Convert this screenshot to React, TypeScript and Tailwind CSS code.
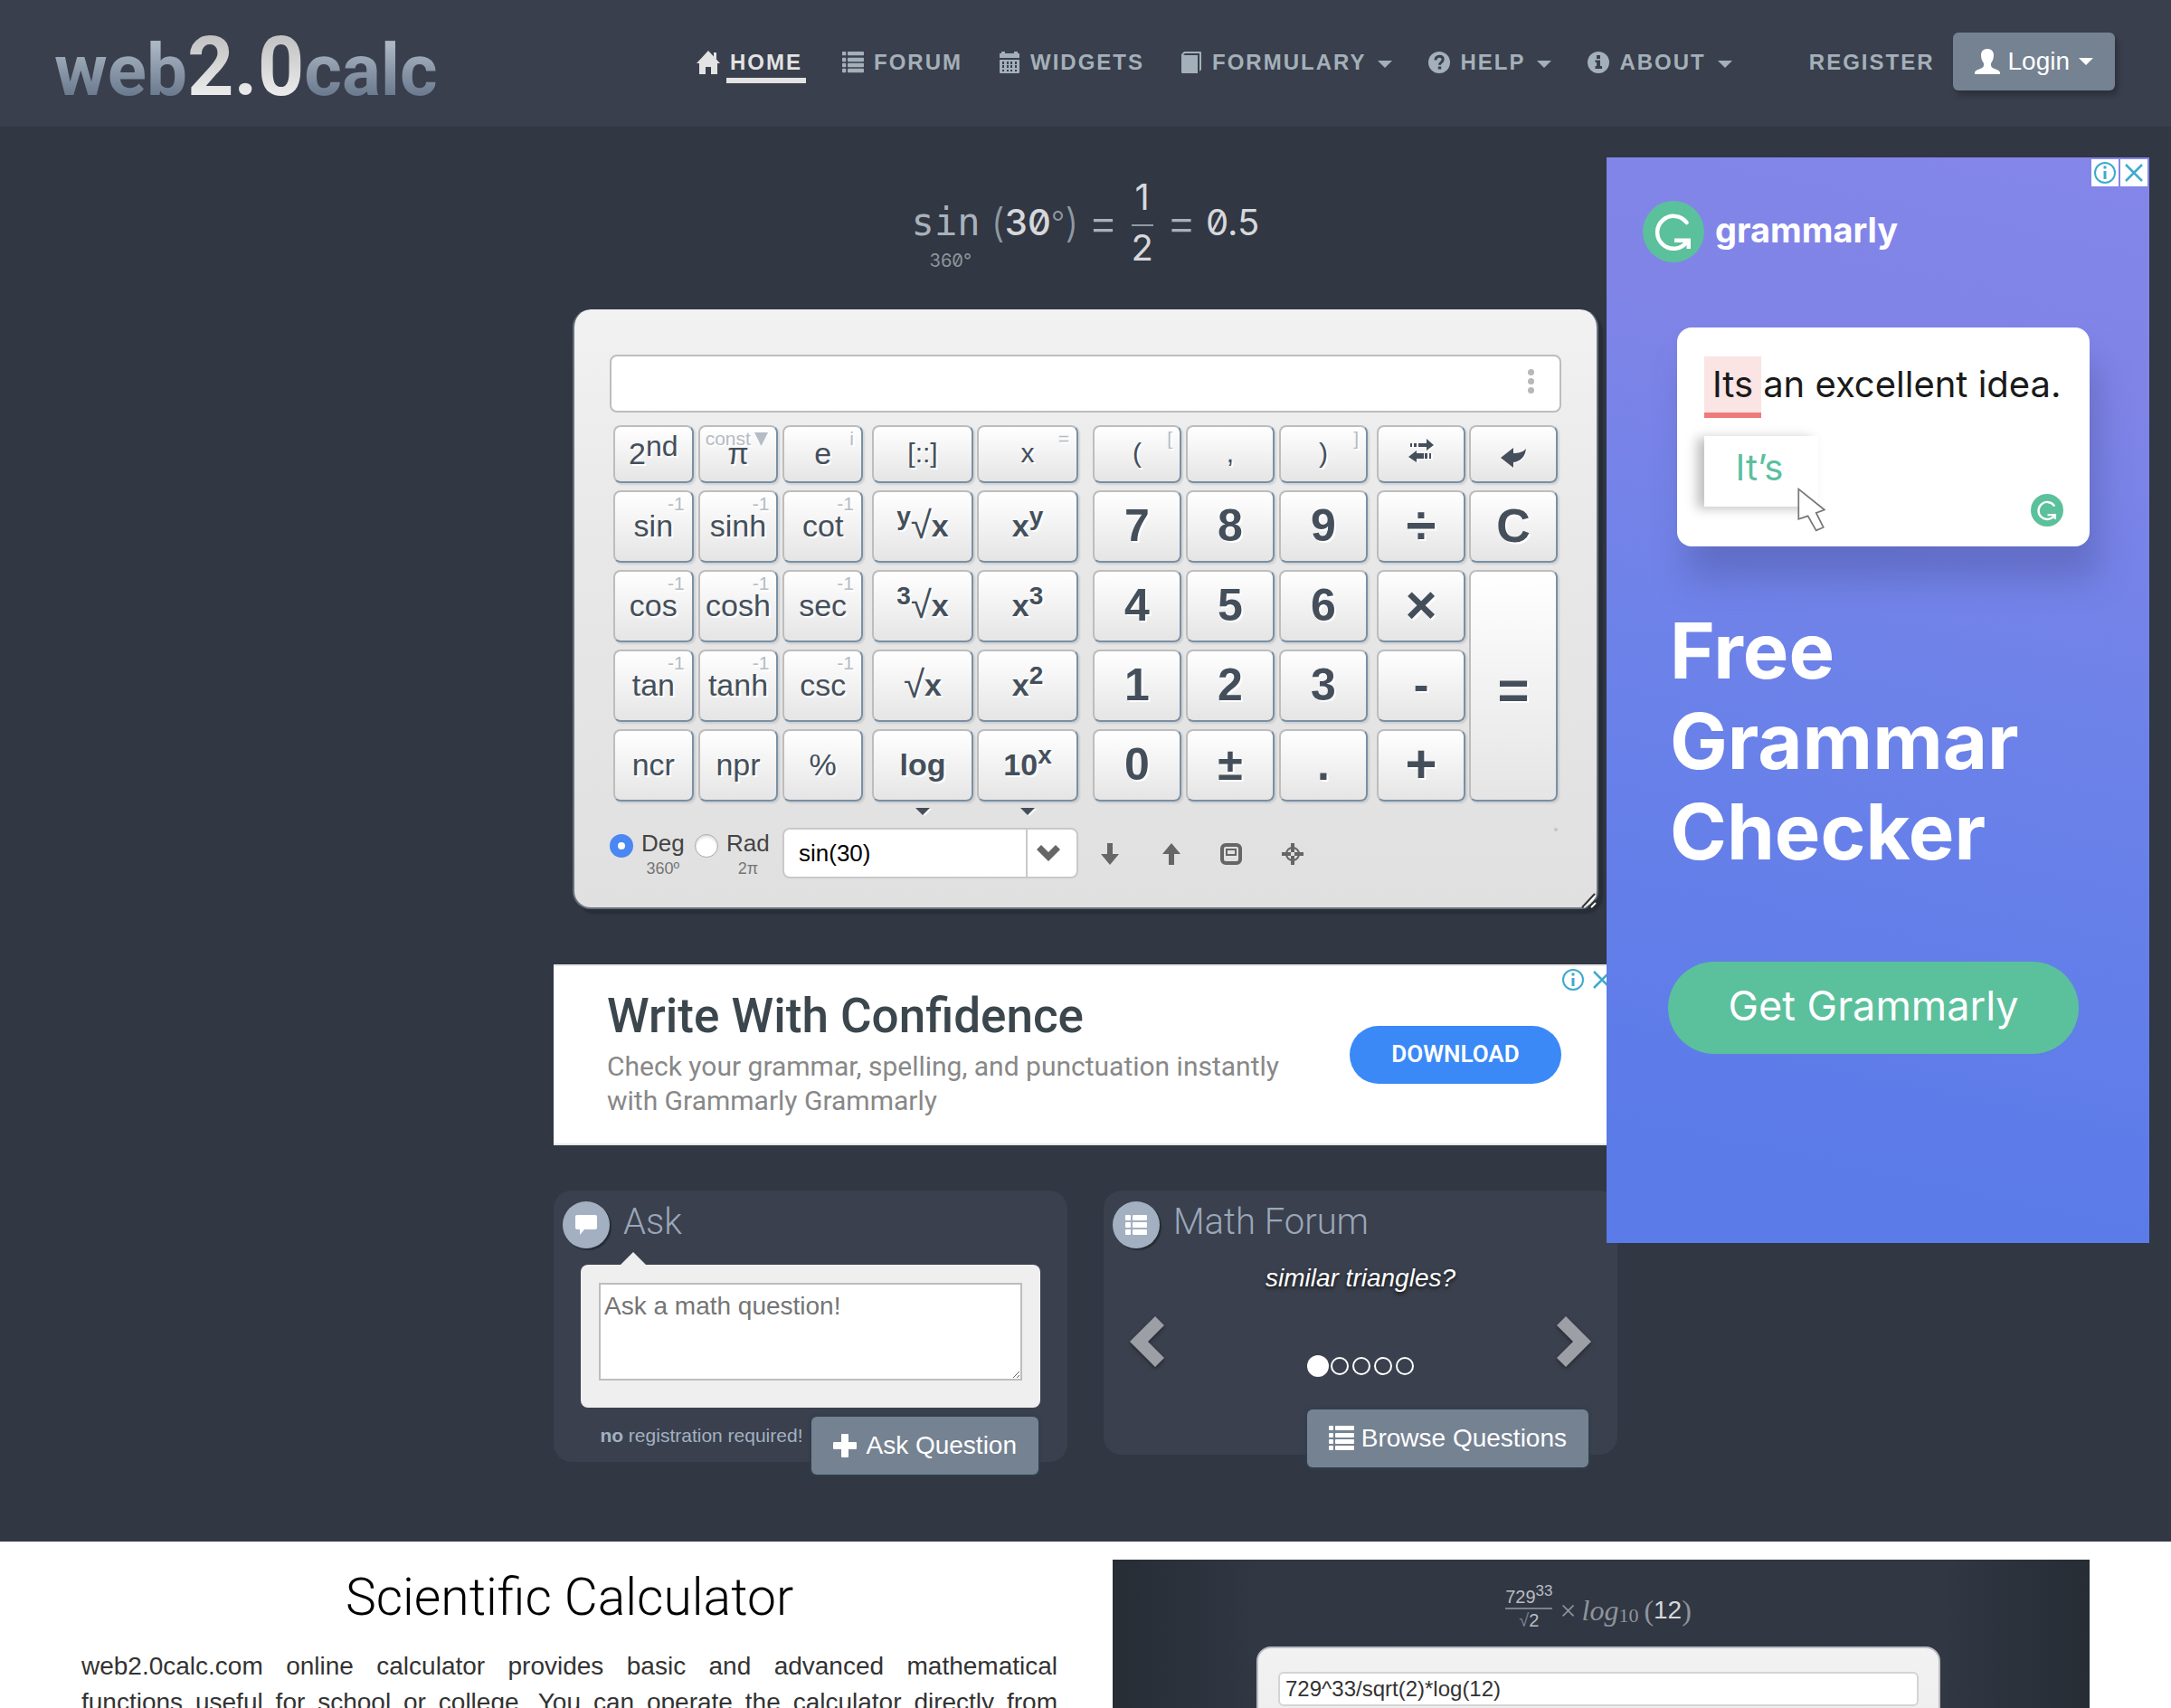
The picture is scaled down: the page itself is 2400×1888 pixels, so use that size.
import type { ReactNode } from "react";

type IconProps = { className?: string };

function HomeIcon({ className = "" }: IconProps) {
  return (
    <svg viewBox="0 0 26 26" className={className} fill="currentColor" aria-hidden="true">
      <path d="M13 0 26 14h-3v12h-7v-8h-6v8H3V14H0z" />
      <path d="M19 2h3v8l-3-3z" />
    </svg>
  );
}

function ListIcon({ className = "" }: IconProps) {
  return (
    <svg viewBox="0 0 28 28" className={className} fill="currentColor" aria-hidden="true">
      {[0, 8, 15, 22].map((y) => (
        <g key={y}>
          <rect x="0" y={y} width="5" height="5" rx="1" />
          <rect x="7" y={y} width="21" height="5" rx="1" />
        </g>
      ))}
    </svg>
  );
}

function ThListIcon({ className = "" }: IconProps) {
  return (
    <svg viewBox="0 0 24 24" className={className} fill="currentColor" aria-hidden="true">
      {[1, 9, 17].map((y) => (
        <g key={y}>
          <rect x="0" y={y} width="6" height="6" rx="1" />
          <rect x="8" y={y} width="16" height="6" rx="1" />
        </g>
      ))}
    </svg>
  );
}

function CalendarIcon({ className = "" }: IconProps) {
  return (
    <svg viewBox="0 0 24 24" className={className} fill="currentColor" fillRule="evenodd" aria-hidden="true">
      <path d="M3 0h4v2h10V0h4v2h2v5H1V2h2z" />
      <path d="M1 9h22v14a1 1 0 0 1-1 1H2a1 1 0 0 1-1-1zM4 11v3h2v-3zm5 0v3h2v-3zm4 0v3h2v-3zm5 0v3h2v-3zM4 15v3h2v-3zm5 0v3h2v-3zm4 0v3h2v-3zm5 0v3h2v-3zM4 20v2h2v-2zm5 0v2h2v-2zm4 0v2h2v-2zm5 0v2h2v-2z" />
    </svg>
  );
}

function BookIcon({ className = "" }: IconProps) {
  return (
    <svg viewBox="0 0 24 24" className={className} fill="currentColor" aria-hidden="true">
      <path d="M4 0h18a1 1 0 0 1 1 1v19l-2 2V2H5L3 4h16v20H2a1 1 0 0 1-1-1V3z" />
    </svg>
  );
}

function HelpIcon({ className = "" }: IconProps) {
  return (
    <svg viewBox="0 0 24 24" className={className} aria-hidden="true">
      <circle cx="12" cy="12" r="12" fill="currentColor" />
      <path d="M8 9.500c0-2.600 1.600-4.200 4.200-4.200 2.500 0 4 1.500 4 3.500 0 3-3.700 3-3.700 6" fill="none" stroke="#393f4c" strokeWidth="3" />
      <rect x="10.800" y="16.500" width="3.400" height="3" fill="#393f4c" />
    </svg>
  );
}

function InfoIcon({ className = "" }: IconProps) {
  return (
    <svg viewBox="0 0 24 24" className={className} aria-hidden="true">
      <circle cx="12" cy="12" r="12" fill="currentColor" />
      <path d="M10 4h4v4h-4zM8.500 9.500H14V16h2v3H8.500v-3H10v-4H8.500z" fill="#393f4c" />
    </svg>
  );
}

function UserIcon({ className = "" }: IconProps) {
  return (
    <svg viewBox="0 0 28 28" className={className} fill="currentColor" aria-hidden="true">
      <path d="M14 0c4 0 7 2.500 7 7 0 4-1.500 7-3 9v2c0 2 1.500 3 4 4s6 2 6 4.500V28H0v-1.500C0 24 3.500 23 6 22s4-2 4-4v-2c-1.500-2-3-5-3-9 0-4.500 3-7 7-7z" />
    </svg>
  );
}

function Caret({ className = "" }: IconProps) {
  return (
    <svg viewBox="0 0 16 8" className={className} fill="currentColor" aria-hidden="true">
      <path d="M0 0h16L8 8z" />
    </svg>
  );
}

function GrammarlyMark({ className = "" }: IconProps) {
  return (
    <svg viewBox="0 0 68 68" className={className} aria-hidden="true">
      <circle cx="34" cy="34" r="34" fill="#5bc09c" />
      <path d="M48.500 24A18 18 0 1 0 49 45" fill="none" stroke="#fff" strokeWidth="4.500" strokeLinecap="round" />
      <path d="M35 41.500h18V53h-4.500v-7H35z" fill="#fff" />
    </svg>
  );
}

function AdChoices({ className = "" }: IconProps) {
  return (
    <svg viewBox="0 0 24 24" className={className} fill="none" stroke="#3fa9cf" aria-hidden="true">
      <circle cx="12" cy="12" r="11" strokeWidth="2" />
      <path d="M12 4.500v3M12 10v9" strokeWidth="3" />
    </svg>
  );
}

function AdClose({ className = "" }: IconProps) {
  return (
    <svg viewBox="0 0 24 24" className={className} fill="none" stroke="#3fa9cf" strokeWidth="2.500" aria-hidden="true">
      <path d="m3 3 18 18M21 3 3 21" />
    </svg>
  );
}

const navItems: { label: string; icon: ReactNode; caret?: boolean; active?: boolean }[] = [
  { label: "Home", icon: <HomeIcon className="h-[26px] w-[26px]" />, active: true },
  { label: "Forum", icon: <ListIcon className="h-6 w-6" /> },
  { label: "Widgets", icon: <CalendarIcon className="h-6 w-6" /> },
  { label: "Formulary", icon: <BookIcon className="h-6 w-6" />, caret: true },
  { label: "Help", icon: <HelpIcon className="h-6 w-6" />, caret: true },
  { label: "About", icon: <InfoIcon className="h-6 w-6" />, caret: true },
];

function Header() {
  return (
    <header className="flex h-[140px] items-center bg-[#393f4c] pr-[62px] pb-1 pl-[60px]">
      <a href="#home" className="w-[424px] pt-4 font-['Roboto',sans-serif] text-[80px] leading-[100px] font-bold whitespace-nowrap">
        <span className="bg-linear-to-b from-[#aab6c2] from-20% to-[#66748a] to-85% bg-clip-text text-transparent">web</span>
        <span className="bg-linear-to-b from-[#c4c4c4] from-20% to-[#ececec] to-80% bg-clip-text text-[90px] text-transparent">2.0</span>
        <span className="bg-linear-to-b from-[#aab6c2] from-20% to-[#66748a] to-85% bg-clip-text text-transparent">calc</span>
      </a>
      <nav className="ml-[286px] flex gap-10 pt-0.5 text-2xl leading-9 font-bold tracking-[2px] text-[#a4b0b9] uppercase">
        {navItems.map((item) => (
          <a
            key={item.label}
            href={"#" + item.label.toLowerCase()}
            className={item.active ? "flex items-center gap-[7px] text-[#e3e3e3]" : "flex items-center gap-[11px]"}
          >
            {item.icon}
            <span className={item.active ? "relative px-1 after:absolute after:inset-x-0 after:-bottom-[5px] after:h-[6px] after:bg-[#e3e3e3]" : ""}>{item.label}</span>
            {item.caret && <Caret className="mt-1 ml-0.5 h-2 w-4" />}
          </a>
        ))}
      </nav>
      <div className="ml-auto flex items-center gap-[21px]">
        <a href="#register" className="pt-0.5 text-2xl font-bold tracking-[2px] text-[#a4b0b9] uppercase">Register</a>
        <button className="flex h-16 items-center rounded-md bg-[#758292] px-6 text-[28px] text-white shadow-[3px_5px_6px_rgba(0,0,0,0.25)]">
          <UserIcon className="mr-2 h-7 w-7" />
          Login
          <Caret className="ml-2.5 h-2 w-4" />
        </button>
      </div>
    </header>
  );
}

function Formula() {
  return (
    <div className="flex justify-center pt-[54px] pb-[44px] font-['Inter',sans-serif] text-[40px] leading-[48px] text-[#d6d8db] slashed-zero">
      <div className="flex items-center">
        <div className="relative font-['DejaVu_Sans_Mono',monospace] text-[42px] text-[#a9b2bb]">
          sin
          <span className="absolute top-[50px] left-5 font-['Inter',sans-serif] text-[20px] leading-8 text-[#8f949b]">360°</span>
        </div>
        <span className="ml-3 text-[44px] font-light text-[#8f99a3]">(</span>
        <span className="font-medium">30</span>
        <span className="text-[34px] font-light text-[#8f99a3]">°</span>
        <span className="text-[44px] font-light text-[#8f99a3]">)</span>
        <span className="ml-2.5 text-[52px] font-light text-[#a9b0b8]">=</span>
        <div className="mx-3.5 flex flex-col items-center">
          <span>1</span>
          <span className="mt-1.5 h-0.5 w-6 bg-[#8f99a3]" />
          <span>2</span>
        </div>
        <span className="text-[52px] font-light text-[#a9b0b8]">=</span>
        <span className="ml-2.5">0.5</span>
      </div>
    </div>
  );
}

function Key({ children, corner, className = "text-[34px]", label }: { children: ReactNode; corner?: string; className?: string; label?: string }) {
  return (
    <button
      aria-label={label}
      className={
        "relative flex items-center justify-center rounded-lg border-2 border-t-[#bdbdbd] border-r-[#7890a5] border-b-[#7890a5] border-l-[#bdbdbd] bg-linear-to-b from-white to-[#e5e5e5] pb-0.5 leading-none whitespace-nowrap text-[#444f5b] shadow-[2px_2px_2px_rgba(0,0,0,0.1)] [text-shadow:2px_2px_0_#fff] " +
        className
      }
    >
      {corner && <span className="absolute top-0.5 right-2 text-[21px] leading-[22px] font-normal text-[#b5bcc5]">{corner}</span>}
      {children}
    </button>
  );
}

function Raised({ children }: { children: ReactNode }) {
  return <sup className="top-0 -translate-y-2.5 self-center text-[28px] leading-none">{children}</sup>;
}

function Root() {
  return <span className="text-[42px] leading-none font-normal">√</span>;
}

const powerKey = "text-[34px] font-bold";
const digitKey = "text-[50px] font-bold";

function Calculator() {
  return (
    <section className="relative mx-[21px] rounded-[20px] border-x-2 border-b-2 border-[#68707c] bg-linear-to-b from-[#f2f2f2] via-[#e8e8e8] via-40% to-[#e0e0e0] px-[39px] pt-[50px] pb-8 shadow-[5px_5px_2px_#282e37]">
      <div className="relative">
        <input aria-label="Expression" className="block h-16 w-full rounded-lg border-2 border-[#bdbdbd] bg-white px-4 text-[28px] text-black" />
        <button aria-label="More" className="absolute top-4 right-[30px] flex flex-col gap-[3px]">
          <span className="h-[7px] w-[7px] rounded-full bg-[#b8b8b8]" />
          <span className="h-[7px] w-[7px] rounded-full bg-[#b8b8b8]" />
          <span className="h-[7px] w-[7px] rounded-full bg-[#b8b8b8]" />
        </button>
      </div>

      <div className="mx-1 mt-3.5 flex">
        <div className="grid flex-[276] grid-cols-3 grid-rows-[64px_repeat(4,80px)] gap-x-[5px] gap-y-2">
          <Key>
            2<sup className="top-0 -translate-y-2 self-center text-[32px] leading-none">nd</sup>
          </Key>
          <Key>
            <span className="absolute top-0.5 left-1.5 flex items-center text-[21px] leading-[22px] text-[#b5bcc5]">
              const
              <svg viewBox="0 0 15 15" className="ml-1 h-[15px] w-[15px]" fill="currentColor" aria-hidden="true">
                <path d="M0 0h15L7.500 15z" />
              </svg>
            </span>
            π
          </Key>
          <Key corner="i">e</Key>
          <Key corner="-1">sin</Key>
          <Key corner="-1">sinh</Key>
          <Key corner="-1">cot</Key>
          <Key corner="-1">cos</Key>
          <Key corner="-1">cosh</Key>
          <Key corner="-1">sec</Key>
          <Key corner="-1">tan</Key>
          <Key corner="-1">tanh</Key>
          <Key corner="-1">csc</Key>
          <Key>ncr</Key>
          <Key>npr</Key>
          <Key>%</Key>
        </div>
        <div className="ml-2.5 grid flex-[228] grid-cols-2 grid-rows-[64px_repeat(4,80px)] gap-x-1 gap-y-2">
          <Key className="text-[30px]">[::]</Key>
          <Key className="text-[30px]" corner="=">x</Key>
          <Key className={powerKey}>
            <Raised>y</Raised>
            <Root />x
          </Key>
          <Key className={powerKey}>
            x<Raised>y</Raised>
          </Key>
          <Key className={powerKey}>
            <Raised>3</Raised>
            <Root />x
          </Key>
          <Key className={powerKey}>
            x<Raised>3</Raised>
          </Key>
          <Key className={powerKey}>
            <Root />x
          </Key>
          <Key className={powerKey}>
            x<Raised>2</Raised>
          </Key>
          <Key className={powerKey}>
            log
            <Caret className="absolute top-[85px] h-2 w-4 drop-shadow-[2px_1px_0_#fff]" />
          </Key>
          <Key className={powerKey}>
            10<Raised>x</Raised>
            <Caret className="absolute top-[85px] h-2 w-4 drop-shadow-[2px_1px_0_#fff]" />
          </Key>
        </div>
        <div className="ml-4 grid flex-[304] grid-cols-3 grid-rows-[64px_repeat(4,80px)] gap-x-[5px] gap-y-2">
          <Key className="text-[30px]" corner="[">(</Key>
          <Key className="text-[30px]">,</Key>
          <Key className="text-[30px]" corner="]">)</Key>
          {["7", "8", "9", "4", "5", "6", "1", "2", "3", "0", "±", "."].map((d) => (
            <Key key={d} className={digitKey}>{d}</Key>
          ))}
        </div>
        <div className="ml-2.5 grid flex-[200] grid-cols-2 grid-rows-[64px_repeat(4,80px)] gap-x-1 gap-y-2">
          <Key label="Convert">
            <svg viewBox="0 0 28 26" className="mb-1.5 h-[26px] w-7 drop-shadow-[2px_1px_0_#fff]" fill="currentColor" aria-hidden="true">
              <path d="M11 5h9V0l8 7-8 6V9h-9zM2 5h2v4H2zM6 5h3v4H6zM17 16H9v-3L0 20l9 6v-4h8zM18 16h3v6h-3zM23 16h2v6h-2z" />
            </svg>
          </Key>
          <Key label="Backspace">
            <svg viewBox="0 0 28 22" className="mt-2.5 h-[22px] w-7 drop-shadow-[1px_1px_0_#fff]" fill="currentColor" aria-hidden="true">
              <path d="M0 11 14 0v6c5 0 11-1 14-5-1 9-6 14-14 15v6z" />
            </svg>
          </Key>
          <Key className="text-[60px] font-bold">÷</Key>
          <Key className="text-[52px] font-bold">C</Key>
          <Key className="text-[60px] font-bold">×</Key>
          <Key className="row-span-3 pt-3 text-[60px] font-bold">=</Key>
          <Key className="text-[50px] font-bold">-</Key>
          <Key className="text-[60px] font-bold">+</Key>
        </div>
      </div>

      <div className="mt-[29px] grid h-14 grid-cols-[191fr_327fr_534fr] text-[26px] leading-[30px] text-[#444]">
        <div className="flex pt-0.5">
          <label className="flex w-[94px] gap-[9px]">
            <input type="radio" name="angle" defaultChecked className="mt-[5px] h-[26px] w-[26px] shrink-0 appearance-none rounded-full border border-[#9a9a9a] bg-white checked:border-[9px] checked:border-[#4a87f2]" />
            <span className="flex flex-col items-center">
              Deg
              <span className="text-[18px] leading-[26px] text-[#757575]">360º</span>
            </span>
          </label>
          <label className="flex gap-[9px]">
            <input type="radio" name="angle" className="mt-[5px] h-[26px] w-[26px] shrink-0 appearance-none rounded-full border border-[#aaa] bg-white shadow-[inset_0_2px_3px_rgba(0,0,0,0.15)] checked:border-[9px] checked:border-[#4a87f2]" />
            <span className="flex flex-col items-center">
              Rad
              <span className="text-[18px] leading-[26px] text-[#757575]">2π</span>
            </span>
          </label>
        </div>
        <div className="relative">
          <select aria-label="History" className="block h-14 w-full appearance-none rounded-lg border-2 border-[#c9c9c9] bg-white pl-4 text-[26px] text-black">
            <option>sin(30)</option>
          </select>
          <span className="pointer-events-none absolute top-0.5 right-0.5 flex h-[52px] w-[56px] items-center justify-center border-l-2 border-[#c9c9c9]">
            <svg viewBox="0 0 26 18" className="mr-2 h-[18px] w-[26px]" fill="#666" aria-hidden="true">
              <path d="M0 5 5 0l8 8 8-8 5 5-13 13z" />
            </svg>
          </span>
        </div>
        <div className="flex items-center pl-[25px] text-[#666]">
          <button aria-label="Down" className="mr-12">
            <svg viewBox="0 0 20 24" className="h-6 w-5" fill="currentColor" aria-hidden="true"><path d="M7 0h6v12h7L10 24 0 12h7z" /></svg>
          </button>
          <button aria-label="Up" className="mr-11">
            <svg viewBox="0 0 20 24" className="h-6 w-5" fill="currentColor" aria-hidden="true"><path d="M7 24h6V12h7L10 0 0 12h7z" /></svg>
          </button>
          <button aria-label="Window" className="mr-11">
            <svg viewBox="0 0 24 24" className="h-6 w-6" fill="none" stroke="currentColor" aria-hidden="true">
              <rect x="2" y="2" width="20" height="20" rx="4" strokeWidth="4" />
              <rect x="7" y="7" width="10" height="6" strokeWidth="2" />
            </svg>
          </button>
          <button aria-label="Center">
            <svg viewBox="0 0 24 24" className="h-6 w-6" fill="none" stroke="currentColor" aria-hidden="true">
              <circle cx="12" cy="12" r="7" strokeWidth="2" />
              <path d="M12 0v10M12 14v10M0 12h10M14 12h10" strokeWidth="4" />
            </svg>
          </button>
          <span className="mr-1 ml-auto h-1 w-1 self-start rounded-full bg-[#c4c4c4]" />
        </div>
      </div>
      <svg viewBox="0 0 18 18" className="absolute right-0 -bottom-px h-[18px] w-[18px]" fill="none" aria-hidden="true">
        <path d="M4 17 17 4M12 17l5-5" stroke="#fff" strokeWidth="2" />
        <path d="M2 17 16 2M9 17l8-8" stroke="#333" strokeWidth="2" />
      </svg>
    </section>
  );
}

function BannerAd() {
  return (
    <section className="relative mt-[61px] flex h-[200px] items-center border-y-2 border-[#e6e8e8] bg-white pr-[62px] pl-[59px] font-['Roboto',sans-serif]">
      <div className="pb-0.5">
        <h2 className="text-[53px] leading-[58px] font-medium text-[#3b464d]">Write With Confidence</h2>
        <p className="mt-2 w-[760px] text-[30px] leading-[38px] text-[#888]">Check your grammar, spelling, and punctuation instantly with Grammarly Grammarly</p>
      </div>
      <button className="ml-auto h-16 w-[234px] rounded-full bg-[#3a89f7] pb-0.5 text-[26px] font-semibold text-white">DOWNLOAD</button>
      <div className="absolute top-[3px] right-[5px] flex gap-2">
        <AdChoices className="h-6 w-6" />
        <AdClose className="h-6 w-6" />
      </div>
    </section>
  );
}

const panelTitle = "font-['Roboto',sans-serif] text-[40px] leading-[46px] font-light text-[#9aa7b9]";
const actionButton = "flex h-16 items-center rounded-md bg-[#758292] px-6 text-[28px] text-white shadow-[0_0_3px_2px_#323f4e]";

function AskPanel() {
  return (
    <section className="rounded-[20px] bg-[#3a404d] pt-3">
      <div className="flex items-start gap-[15px] pl-2.5">
        <span className="flex h-[52px] w-[52px] items-center justify-center rounded-full bg-[#a2b0c1] text-white shadow-[2px_2px_1px_#262c36]">
          <svg viewBox="0 0 24 22" className="h-[22px] w-6" fill="currentColor" aria-hidden="true">
            <path d="M2 0h20a2 2 0 0 1 2 2v12a2 2 0 0 1-2 2H10l-5 6v-6H2a2 2 0 0 1-2-2V2a2 2 0 0 1 2-2z" />
          </svg>
        </span>
        <h2 className={panelTitle}>Ask</h2>
      </div>
      <div className="relative mx-[30px] mt-[18px] rounded-lg bg-[#efefef] px-5 pt-5 pb-[30px]">
        <svg viewBox="0 0 28 14" className="absolute -top-3.5 left-11 h-3.5 w-7" fill="#efefef" aria-hidden="true"><path d="M14 0l14 14H0z" /></svg>
        <textarea aria-label="Question" placeholder="Ask a math question!" className="block h-[108px] w-full border-2 border-[#bdbdbd] bg-white px-1 py-1.5 text-[28px] leading-9 placeholder:text-[#757575]" />
      </div>
      <div className="mt-2.5 mr-8 -mb-3.5 flex items-center justify-end gap-2.5">
        <p className="-mt-[22px] text-[21px] text-[#a2b0c1]">
          <b>no</b> registration required!
        </p>
        <button className={actionButton}>
          <svg viewBox="0 0 26 26" className="mr-2.5 h-[26px] w-[26px]" fill="currentColor" aria-hidden="true">
            <path d="M10 0h6a1 1 0 0 1 1 1v8h8a1 1 0 0 1 1 1v6a1 1 0 0 1-1 1h-8v8a1 1 0 0 1-1 1h-6a1 1 0 0 1-1-1v-8H1a1 1 0 0 1-1-1v-6a1 1 0 0 1 1-1h8V1a1 1 0 0 1 1-1z" />
          </svg>
          Ask Question
        </button>
      </div>
    </section>
  );
}

function ForumPanel() {
  return (
    <section className="rounded-[20px] bg-[#3a404d] pt-3">
      <div className="flex items-start gap-[15px] pl-2.5">
        <span className="flex h-[52px] w-[52px] items-center justify-center rounded-full bg-[#a2b0c1] text-white shadow-[2px_2px_1px_#262c36]">
          <ThListIcon className="h-6 w-6" />
        </span>
        <h2 className={panelTitle}>Math Forum</h2>
      </div>
      <div className="flex h-[178px] justify-between px-[29px] pt-4">
        <button aria-label="Previous" className="mb-2 drop-shadow-[0_2px_2px_rgba(0,0,0,0.4)]">
          <svg viewBox="0 0 38 56" className="mt-5 h-14 w-[38px]" fill="#9c9fa6" aria-hidden="true"><path d="M28 0 38 10 20 28 38 46 28 56 0 28z" /></svg>
        </button>
        <div className="flex flex-col items-center">
          <a href="#similar-triangles" className="text-[28px] leading-[34px] text-white italic [text-shadow:0_2px_4px_rgba(0,0,0,0.8)]">similar triangles?</a>
          <div className="mt-[68px] flex items-center gap-1">
            {[0, 1, 2, 3, 4].map((n) => (
              <button
                key={n}
                aria-label={"Question " + (n + 1)}
                className={n === 0 ? "-mr-0.5 h-6 w-6 rounded-full bg-white" : "h-5 w-5 rounded-full border-2 border-white"}
              />
            ))}
          </div>
        </div>
        <button aria-label="Next" className="mb-2 drop-shadow-[0_2px_2px_rgba(0,0,0,0.4)]">
          <svg viewBox="0 0 38 56" className="mt-5 h-14 w-[38px]" fill="#9c9fa6" aria-hidden="true"><path d="M10 0 0 10 18 28 0 46 10 56 38 28z" /></svg>
        </button>
      </div>
      <div className="mr-8 -mb-3.5 flex justify-end">
        <button className={actionButton}>
          <ListIcon className="mr-2 h-7 w-7" />
          Browse Questions
        </button>
      </div>
    </section>
  );
}

function SideAd() {
  return (
    <aside className="absolute top-[34px] right-6 h-[1200px] w-[600px] bg-[linear-gradient(192deg,#8486e9_0%,#8084e7_20%,#6c82e9_50%,#5b7be9_90%)] px-[68px]">
      <div className="absolute top-0.5 right-0.5 flex gap-0.5">
        <span className="bg-white p-[3px]"><AdChoices className="h-6 w-6" /></span>
        <span className="bg-white p-[3px]"><AdClose className="h-6 w-6" /></span>
      </div>
      <div className="-ml-7 flex items-center gap-3 pt-12">
        <GrammarlyMark className="h-[68px] w-[68px]" />
        <span className="pb-1 font-['Inter',sans-serif] text-[38px] leading-[52px] font-bold text-white">grammarly</span>
      </div>
      <div className="relative -mr-0.5 ml-2.5 mt-[72px] h-[242px] rounded-2xl bg-white pt-8 pl-[30px] font-['Inter',sans-serif] text-[40px] leading-[62px] text-[#1a1a1a] shadow-[10px_36px_36px_rgba(70,80,150,0.4)]">
        <p className="flex whitespace-nowrap">
          <span className="mr-0.5 border-b-6 border-[#ef7a7a] bg-[#fae4e4] px-[9px]">Its</span>
          an excellent idea.
        </p>
        <div className="relative mt-5 flex h-[78px] w-[126px] items-center justify-center bg-white pr-1 pb-2 text-[#5bbf9f] shadow-[-8px_2px_12px_rgba(0,0,0,0.25)]">
          It’s
          <svg viewBox="0 0 28 42" className="absolute -right-2 -bottom-7 h-[49px] w-8" fill="#fff" stroke="#777" strokeWidth="1.500" aria-hidden="true">
            <path d="M2 1v29l9-3 8 14 7-3-7-14 8-3z" />
          </svg>
        </div>
        <GrammarlyMark className="absolute right-[29px] bottom-[22px] h-9 w-9" />
      </div>
      <h2 className="mt-[66px] ml-0.5 font-['Inter',sans-serif] text-[85px] leading-[100px] font-bold text-white">
        Free
        <br />
        Grammar
        <br />
        Checker
      </h2>
      <button className="mt-[93px] h-[102px] w-[454px] rounded-full bg-[#5bc09c] pb-1 font-['Inter',sans-serif] text-[45px] text-white">Get Grammarly</button>
    </aside>
  );
}

function About() {
  return (
    <section className="grid grid-cols-2 bg-white px-[30px]">
      <div className="mr-[31px] ml-[60px] pt-[30px]">
        <h1 className="text-center font-['Roboto',sans-serif] text-[57px] leading-[64px] font-light text-black">Scientific Calculator</h1>
        <p className="mt-6 text-justify text-[28px] leading-10 text-[#333] [text-align-last:justify]">
          web2.0calc.com online calculator provides basic and advanced mathematical
          <br />
          functions useful for school or college. You can operate the calculator directly from
        </p>
      </div>
      <div className="mt-5 mr-[60px] ml-[30px] h-[500px] bg-linear-to-r from-[#262d35] via-[#313743] via-15% to-[#313743] to-85%">
        <div className="h-full bg-linear-to-r from-transparent from-85% to-[#262d35] pt-6 pr-[165px] pl-[159px] font-['Liberation_Serif',serif] text-[32px] leading-9 text-[#8f949c]">
          <div className="flex h-[64px] items-center justify-center">
            <span className="mb-1 flex flex-col items-center font-['Liberation_Sans',sans-serif] text-[20px] leading-6 text-[#b9bdc3]">
              <span className="border-b-2 border-[#7b828d]">
                729<sup className="text-[17px]">33</sup>
              </span>
              <span>
                <span className="text-[#7b828d]">√</span>2
              </span>
            </span>
            <span className="ml-2">×</span>
            <span className="ml-1.5 italic">log</span>
            <sub className="text-[22px]">10</sub>
            <span className="ml-1.5">(</span>
            <span className="font-['Liberation_Sans',sans-serif] text-[28px] text-[#d6d8db]">12</span>
            <span>)</span>
          </div>
          <div className="mt-2 h-[400px] rounded-2xl border-2 border-[#b9bcc2] bg-linear-to-b from-[#f2f2f2] to-[#e0e0e0] px-[22px] pt-[26px]">
            <input aria-label="Example expression" readOnly value="729^33/sqrt(2)*log(12)" className="block h-[38px] w-full rounded-md border-2 border-[#d4d4d4] bg-white px-1.5 font-['Liberation_Sans',sans-serif] text-2xl text-[#333]" />
          </div>
        </div>
      </div>
    </section>
  );
}

export default function App() {
  return (
    <div className="h-screen overflow-hidden bg-white font-['Liberation_Sans',Arial,sans-serif]">
      <Header />
      <main className="relative bg-[#313743] pb-[88px]">
        <div className="mx-auto max-w-[1176px]">
          <Formula />
          <Calculator />
          <BannerAd />
          <div className="mt-[50px] grid grid-cols-2 items-start gap-10">
            <AskPanel />
            <ForumPanel />
          </div>
        </div>
        <SideAd />
      </main>
      <About />
    </div>
  );
}
